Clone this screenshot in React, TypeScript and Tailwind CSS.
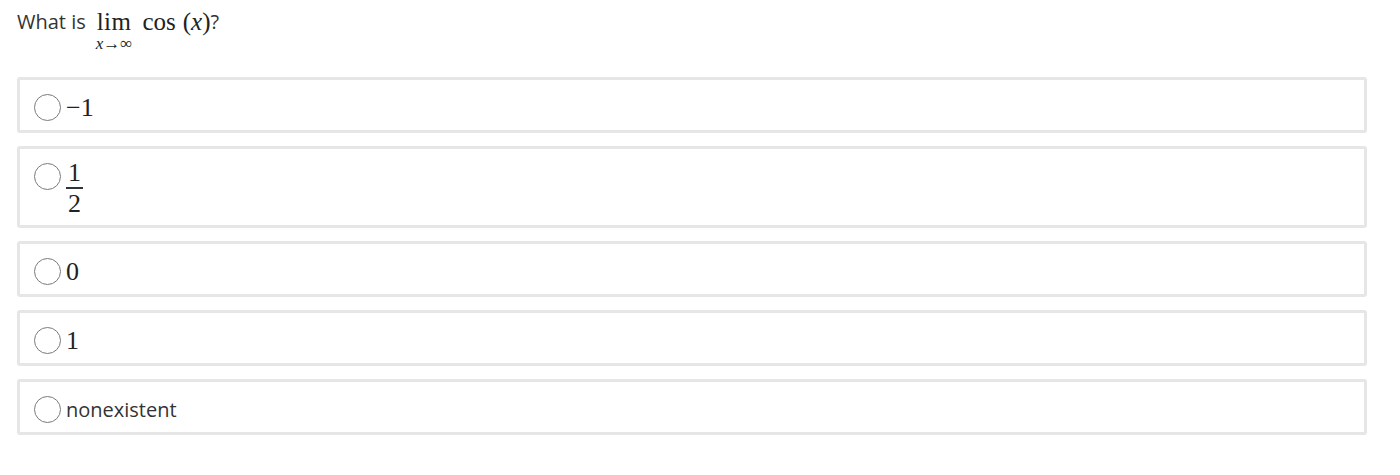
import { ReactNode } from 'react';

const sans = { fontFamily: '"Open Sans", "Liberation Sans", sans-serif' };
const serif = { fontFamily: '"Liberation Serif", "DejaVu Serif", serif' };

interface Option {
  id: string;
  label: ReactNode;
}

const Radio = () => (
  <span className="w-[27px] h-[27px] rounded-full border border-[#7a7a7a] bg-white flex-shrink-0" />
);

const options: Option[] = [
  { id: 'a', label: <span style={serif} className="text-[26px] leading-[27px] text-[#222]">−1</span> },
  {
    id: 'b',
    label: (
      <span style={serif} className="inline-flex flex-col items-center -mt-[3px] text-[26px] leading-[25px] text-[#222]">
        <span className="px-[2px]">1</span>
        <span className="block w-full h-[2px] bg-[#333] my-[2px]" />
        <span className="px-[2px]">2</span>
      </span>
    ),
  },
  { id: 'c', label: <span style={serif} className="text-[26px] leading-[27px] text-[#222]">0</span> },
  { id: 'd', label: <span style={serif} className="text-[26px] leading-[27px] text-[#222]">1</span> },
  { id: 'e', label: <span style={sans} className="text-[20px] leading-[27px] text-[#333]">nonexistent</span> },
];

export default function App() {
  return (
    <div className="bg-white w-[1400px] h-[475px] px-[17px] pt-[7px]" style={sans}>
      {/* 題目 */}
      <div className="flex items-start text-[20px] text-[#333] h-[70px]">
        <span className="leading-[30px] mr-[10px]">What is</span>
        <span className="inline-flex flex-col items-center mr-[10px]" style={serif}>
          <span className="text-[25px] leading-[28px] pt-[1px] tracking-[0.5px] text-[#222]">lim</span>
          <span className="text-[17px] leading-[15px] text-[#222] whitespace-nowrap">
            <span className="italic">x</span>→∞
          </span>
        </span>
        <span className="text-[25px] leading-[30px] text-[#222]" style={serif}>
          cos<span className="ml-[7px]">(</span><span className="italic">x</span>)
        </span>
        <span className="leading-[30px]">?</span>
      </div>

      {/* 選項 */}
      <div className="w-[1350px] flex flex-col gap-[13px]">
        {options.map(opt => (
          <label
            key={opt.id}
            className="flex items-start gap-[5px] border-[3px] border-[#e6e6e6] rounded-[3px] pl-[14px] pt-[14px] pb-[9px] cursor-pointer"
          >
            <Radio />
            {opt.label}
          </label>
        ))}
      </div>
    </div>
  );
}
